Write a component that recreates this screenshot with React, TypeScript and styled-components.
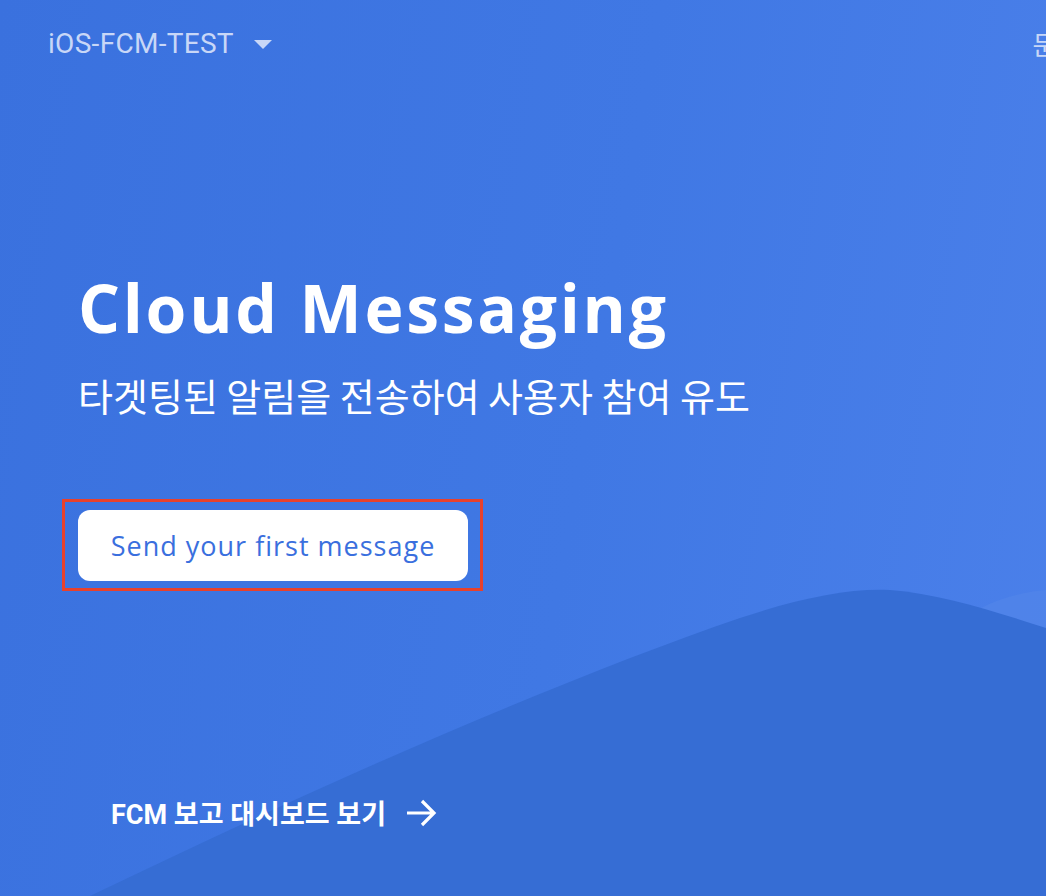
import styled, { createGlobalStyle } from 'styled-components'

const GlobalStyle = createGlobalStyle`
  html, body {
    margin: 0;
    padding: 0;
  }
  body {
    font-family: Roboto, "Noto Sans CJK KR", sans-serif;
  }
`

export default function App() {
  return (
    <>
      <GlobalStyle />
      <Page>
        <Hills viewBox="0 0 1046 896" preserveAspectRatio="none" aria-hidden>
          <path
            d="M960 620 C 990 600, 1020 592, 1046 590 L 1046 896 L 960 896 Z"
            fill="#5486ea"
            opacity="0.55"
          />
          <path
            d="M90 896 C 330 780, 560 680, 740 618 C 800 598, 850 588, 890 590 C 940 594, 990 610, 1046 628 L 1046 896 Z"
            fill="#366dd4"
          />
        </Hills>

        <Header>
          <ProjectPicker>
            iOS-FCM-TEST
            <Caret viewBox="0 0 20 10">
              <path d="M0 0 L20 0 L10 10 Z" fill="currentColor" />
            </Caret>
          </ProjectPicker>
          <DocsLink>문서로 이동</DocsLink>
        </Header>

        <Hero>
          <Title>Cloud Messaging</Title>
          <Subtitle>타겟팅된 알림을 전송하여 사용자 참여 유도</Subtitle>
          <Highlight>
            <PrimaryButton>Send your first message</PrimaryButton>
          </Highlight>
        </Hero>

        <Footer>
          <DashboardLink>
            FCM 보고 대시보드 보기
            <Arrow viewBox="0 0 32 28">
              <path
                d="M2 14 H29 M17 2 L29 14 L17 26"
                fill="none"
                stroke="currentColor"
                strokeWidth="3.2"
              />
            </Arrow>
          </DashboardLink>
        </Footer>
      </Page>
    </>
  )
}

const Page = styled.div`
  position: relative;
  width: 1046px;
  height: 896px;
  overflow: hidden;
  background: linear-gradient(100deg, #3a71de 0%, #4078e4 55%, #4b80ea 100%);
  display: flex;
  flex-direction: column;
`

const Hills = styled.svg`
  position: absolute;
  inset: 0;
  width: 100%;
  height: 100%;
`

const Header = styled.header`
  position: relative;
  display: flex;
  justify-content: space-between;
  align-items: center;
  padding: 26px 0 0 48px;
  height: 34px;
`

const ProjectPicker = styled.div`
  display: flex;
  align-items: center;
  gap: 19px;
  font-family: Roboto, sans-serif;
  font-size: 28px;
  letter-spacing: 0.3px;
  color: #c8d7f7;
  white-space: nowrap;
`

const Caret = styled.svg`
  width: 20px;
  height: 9px;
  margin-top: 2px;
`

const DocsLink = styled.div`
  font-family: "Noto Sans CJK KR", sans-serif;
  font-size: 26px;
  color: #c8d7f7;
  white-space: nowrap;
  margin-right: -112px;
`

const Hero = styled.main`
  position: relative;
  display: flex;
  flex-direction: column;
  align-items: flex-start;
  padding: 207px 0 0 62px;
`

const Title = styled.h1`
  margin: 0 0 0 16px;
  font-family: "Open Sans", sans-serif;
  font-weight: 700;
  font-size: 66px;
  line-height: 80px;
  letter-spacing: 2.7px;
  color: #ffffff;
`

const Subtitle = styled.p`
  margin: 24px 0 0 16px;
  font-family: "Noto Sans CJK KR", sans-serif;
  font-size: 38px;
  line-height: 48px;
  color: #ffffff;
`

const Highlight = styled.div`
  margin-top: 80px;
  padding: 8px 12px 7px 13px;
  border: 3px solid #e8412c;
`

const PrimaryButton = styled.button`
  display: flex;
  align-items: center;
  justify-content: center;
  width: 390px;
  height: 71px;
  border: none;
  border-radius: 12px;
  background: #ffffff;
  color: #3a6fde;
  font-family: "Open Sans", sans-serif;
  font-size: 27px;
  font-weight: 500;
  letter-spacing: 1px;
  cursor: pointer;
`

const Footer = styled.footer`
  position: relative;
  padding: 202px 0 0 111px;
`

const DashboardLink = styled.a`
  display: inline-flex;
  align-items: center;
  gap: 19px;
  font-family: Roboto, "Noto Sans CJK KR", sans-serif;
  font-size: 27px;
  font-weight: 700;
  color: #ffffff;
  cursor: pointer;
`

const Arrow = styled.svg`
  width: 32px;
  height: 28px;
`
